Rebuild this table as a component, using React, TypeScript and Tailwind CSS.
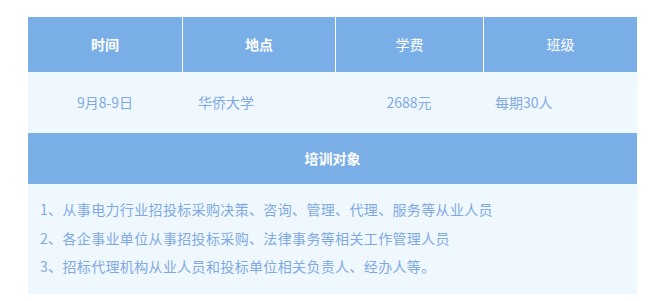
const FONT = "font-['Microsoft_YaHei','Noto_Sans_CJK_SC','Noto_Sans',sans-serif]";

const audience = [
  "1、从事电力行业招投标采购决策、咨询、管理、代理、服务等从业人员",
  "2、各企事业单位从事招投标采购、法律事务等相关工作管理人员",
  "3、招标代理机构从业人员和投标单位相关负责人、经办人等。",
];

function App(): JSX.Element {
  return (
    <div className={`w-[660px] h-[301px] bg-white pt-[17px] pl-[28px] ${FONT}`}>
      <div className="w-[609px] text-[14px]">
        <div className="grid grid-cols-[154px_153px_148px_154px] h-[55px] bg-[#7aaee6] text-white">
          <div className="flex items-center justify-center font-bold">时间</div>
          <div className="flex items-center justify-center font-bold border-l border-white">地点</div>
          <div className="flex items-center justify-center border-l border-white">学费</div>
          <div className="flex items-center justify-center border-l border-white">班级</div>
        </div>
        <div className="grid grid-cols-[154px_153px_148px_154px] h-[61px] bg-[#f0f8ff] text-[#80a9e2]">
          <div className="flex items-center justify-center">9月8-9日</div>
          <div className="flex items-center pl-[16px]">华侨大学</div>
          <div className="flex items-center justify-center">2688元</div>
          <div className="flex items-center pl-[12px]">每期30人</div>
        </div>
        <div className="flex items-center justify-center h-[51px] bg-[#7aaee6] text-white font-bold">
          培训对象
        </div>
        <div className="bg-[#f0f8ff] text-[#80a9e2] px-[12px] pt-[11px] pb-[13px] leading-[28.5px] tracking-[0.35px]">
          {audience.map((line) => (
            <div key={line}>{line}</div>
          ))}
        </div>
      </div>
    </div>
  );
}

export default App;
